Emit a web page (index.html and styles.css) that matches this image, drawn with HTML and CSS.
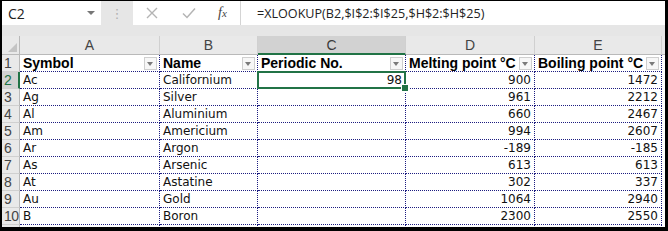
FILE: index.html
```html
<!DOCTYPE html>
<html>
<head>
<meta charset="utf-8">
<link rel="stylesheet" href="styles.css">
</head>
<body>
<div class="frame">
  <div class="fbar">
    <div class="namebox"><span class="nm">C2</span><span class="dd"></span></div>
    <div class="grip">&#8942;</div>
    <div class="fbox">
      <svg class="ic" width="14" height="14" viewBox="0 0 14 14"><path d="M2 2 L12 12 M12 2 L2 12" stroke="#b4b4b4" stroke-width="1.4" fill="none"/></svg>
      <svg class="ic chk" width="16" height="14" viewBox="0 0 16 14"><path d="M2 7.5 L6 11.5 L14 2.5" stroke="#b4b4b4" stroke-width="1.5" fill="none"/></svg>
      <span class="fx">f<span class="fxs">x</span></span>
      <div class="ftext">=XLOOKUP(B2,$I$2:$I$25,$H$2:$H$25)</div>
    </div>
  </div>
  <div class="sheet">
    <div class="ch corner"><span class="tri"></span></div>
    <div class="ch">A</div>
    <div class="ch">B</div>
    <div class="ch sel">C</div>
    <div class="ch">D</div>
    <div class="ch">E</div>
    <div class="ch fill"></div>

    <div class="rh">1</div>
    <div class="c hd"><span>Symbol</span><span class="flt"></span></div>
    <div class="c hd"><span>Name</span><span class="flt"></span></div>
    <div class="c hd"><span>Periodic No.</span><span class="flt"></span></div>
    <div class="c hd"><span>Melting point °C</span><span class="flt"></span></div>
    <div class="c hd"><span>Boiling point °C</span><span class="flt"></span></div>
    <div class="c fill"></div>

    <div class="rh rsel">2</div>
    <div class="c">Ac</div><div class="c">Californium</div><div class="c n active">98</div><div class="c n">900</div><div class="c n">1472</div><div class="c fill"></div>

    <div class="rh">3</div>
    <div class="c">Ag</div><div class="c">Silver</div><div class="c n"></div><div class="c n">961</div><div class="c n">2212</div><div class="c fill"></div>

    <div class="rh">4</div>
    <div class="c">Al</div><div class="c">Aluminium</div><div class="c n"></div><div class="c n">660</div><div class="c n">2467</div><div class="c fill"></div>

    <div class="rh">5</div>
    <div class="c">Am</div><div class="c">Americium</div><div class="c n"></div><div class="c n">994</div><div class="c n">2607</div><div class="c fill"></div>

    <div class="rh">6</div>
    <div class="c">Ar</div><div class="c">Argon</div><div class="c n"></div><div class="c n">-189</div><div class="c n">-185</div><div class="c fill"></div>

    <div class="rh">7</div>
    <div class="c">As</div><div class="c">Arsenic</div><div class="c n"></div><div class="c n">613</div><div class="c n">613</div><div class="c fill"></div>

    <div class="rh">8</div>
    <div class="c">At</div><div class="c">Astatine</div><div class="c n"></div><div class="c n">302</div><div class="c n">337</div><div class="c fill"></div>

    <div class="rh">9</div>
    <div class="c">Au</div><div class="c">Gold</div><div class="c n"></div><div class="c n">1064</div><div class="c n">2940</div><div class="c fill"></div>

    <div class="rh">10</div>
    <div class="c">B</div><div class="c">Boron</div><div class="c n"></div><div class="c n">2300</div><div class="c n">2550</div><div class="c fill"></div>

    <div class="rh rlast"></div>
    <div class="c"></div><div class="c"></div><div class="c"></div><div class="c"></div><div class="c"></div><div class="c fill"></div>
  </div>
</div>
</body>
</html>
```
FILE: styles.css
```css
* { box-sizing: border-box; }
html, body { margin: 0; padding: 0; }
body { background: #000; width: 668px; height: 231px; overflow: hidden; }

.frame {
  margin: 1px 3px 0 2px;
  width: 663px;
  height: 226px;
  background: #e6e6e6;
  overflow: hidden;
}

.fbar {
  display: flex;
  height: 24px;
}
.namebox {
  width: 99px;
  background: #fff;
  display: flex;
  align-items: center;
  justify-content: space-between;
  padding: 0 6px 0 6px;
  font-family: "Open Sans", sans-serif;
  font-size: 14px;
  color: #222;
}
.dd {
  width: 0; height: 0;
  border-left: 4px solid transparent;
  border-right: 4px solid transparent;
  border-top: 4px solid #777;
}
.grip {
  width: 32px;
  display: flex;
  align-items: center;
  justify-content: center;
  color: #b0b0b0;
  font-family: "DejaVu Sans", sans-serif;
  font-size: 13px;
}
.fbox {
  flex: 1;
  background: #fff;
  display: flex;
  align-items: center;
  padding-left: 12px;
}
.ic { margin-right: 22px; }
.chk { margin-right: 21px; }
.fx {
  font-family: "Liberation Serif", serif;
  font-style: italic;
  font-size: 14px;
  color: #444;
  width: 22px;
}
.fxs { font-size: 11px; }
.ftext {
  border-left: 1px solid #d4d4d4;
  height: 24px;
  display: flex;
  align-items: center;
  padding-left: 16px;
  font-family: "Open Sans", sans-serif;
  font-size: 12.6px;
  color: #222;
}

.sheet {
  margin-top: 11px;
  display: grid;
  grid-template-columns: 18px 140px 98px 148px 129px 127px 3px;
  grid-template-rows: 19px repeat(11, 17px);
  background: #fff;
}

.ch {
  background: #e9e9e9;
  border-right: 1px solid #d0d0d0;
  border-bottom: 1px solid #b9b9b9;
  font-family: "Liberation Sans", sans-serif;
  font-size: 14px;
  color: #444;
  display: flex;
  align-items: center;
  justify-content: center;
}
.ch.sel {
  background: #d2d2d2;
  border-bottom: 2px solid #217346;
  color: #3a3a3a;
}
.ch.fill { border-right: none; }
.corner {
  position: relative;
  border-right: 1px solid #b9b9b9;
}
.tri {
  position: absolute;
  right: 2px;
  bottom: 2px;
  width: 0; height: 0;
  border-left: 9px solid transparent;
  border-bottom: 9px solid #c4c4c4;
}

.rh {
  background: #e9e9e9;
  border-right: 1px solid #b9b9b9;
  border-bottom: 1px solid #d0d0d0;
  font-family: "Liberation Sans", sans-serif;
  font-size: 14px;
  color: #444;
  display: flex;
  align-items: center;
  padding-left: 2px;
  letter-spacing: -0.5px;
}
.rh.rsel {
  background: #d2d2d2;
  border-right: 2px solid #217346;
  color: #217346;
}

.c {
  border-right: 1px dotted #1c1c80;
  border-bottom: 1px dotted #1c1c80;
  font-family: "DejaVu Sans", sans-serif;
  font-size: 12px;
  color: #111;
  display: flex;
  align-items: center;
  padding: 0 3px;
  white-space: nowrap;
  overflow: hidden;
}
.c.n { justify-content: flex-end; }
.c.fill { border-right: none; border-bottom: none; }
.c.hd {
  font-family: "Liberation Sans", sans-serif;
  font-weight: bold;
  font-size: 14px;
  color: #000;
  justify-content: space-between;
  padding-right: 2px;
}
.flt {
  width: 13px;
  height: 13px;
  border: 1px solid #cfcfcf;
  background: #f7f7f7;
  position: relative;
}
.flt::after {
  content: "";
  position: absolute;
  left: 2px;
  top: 4px;
  width: 0; height: 0;
  border-left: 3.5px solid transparent;
  border-right: 3.5px solid transparent;
  border-top: 4px solid #7a7a7a;
}

.active { position: relative; overflow: visible; }
.active::before {
  content: "";
  position: absolute;
  left: -1px; top: -1px; right: -1px; bottom: -1px;
  border: 2px solid #217346;
}
.active::after {
  content: "";
  position: absolute;
  right: -4px;
  bottom: -4px;
  width: 6px;
  height: 6px;
  background: #217346;
  border: 1px solid #fff;
}
```
